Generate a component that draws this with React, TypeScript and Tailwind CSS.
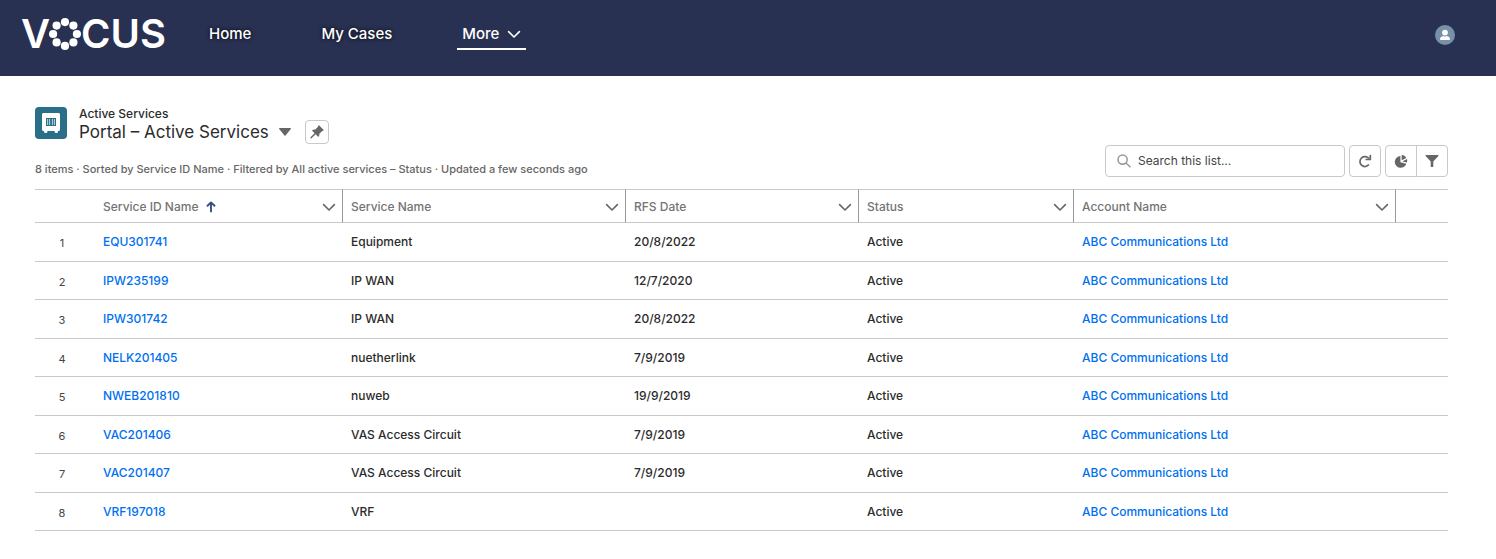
import React from 'react';
import { clsx } from 'clsx';

const columns = [
  { label: 'Service ID Name', width: 'w-[248px]', sorted: true },
  { label: 'Service Name', width: 'w-[283px]' },
  { label: 'RFS Date', width: 'w-[233px]' },
  { label: 'Status', width: 'w-[215px]' },
  { label: 'Account Name', width: '' },
];

const services = [
  { id: 'EQU301741', name: 'Equipment', date: '20/8/2022' },
  { id: 'IPW235199', name: 'IP WAN', date: '12/7/2020' },
  { id: 'IPW301742', name: 'IP WAN', date: '20/8/2022' },
  { id: 'NELK201405', name: 'nuetherlink', date: '7/9/2019' },
  { id: 'NWEB201810', name: 'nuweb', date: '19/9/2019' },
  { id: 'VAC201406', name: 'VAS Access Circuit', date: '7/9/2019' },
  { id: 'VAC201407', name: 'VAS Access Circuit', date: '7/9/2019' },
  { id: 'VRF197018', name: 'VRF', date: '' },
];

const Chevron = ({ className }: { className?: string }) => (
  <svg viewBox="0 0 14 14" className={className} fill="none" stroke="currentColor" strokeWidth="1.6" strokeLinecap="round" strokeLinejoin="round" aria-hidden="true">
    <path d="M1.6 4.6 7 10l5.4-5.4" />
  </svg>
);

const Logo = () => (
  <a href="#" aria-label="Vocus" className="flex items-center h-8 text-[40px] leading-8 font-semibold text-white">
    <span>V</span>
    <svg viewBox="0 0 32 32" className="size-8 -ml-px" fill="currentColor" aria-hidden="true">
      <circle cx="16" cy="4.1" r="4.1" />
      <circle cx="24.4" cy="7.6" r="4.1" />
      <circle cx="27.9" cy="16" r="4.1" />
      <circle cx="24.4" cy="24.4" r="4.1" />
      <circle cx="16" cy="27.9" r="4.1" />
      <circle cx="7.6" cy="24.4" r="4.1" />
      <circle cx="4.1" cy="16" r="4.1" />
      <circle cx="7.6" cy="7.6" r="4.1" />
    </svg>
    <span>CUS</span>
  </a>
);

const Header = () => (
  <header className="flex items-start h-[76px] pl-[21px] pr-[41px] bg-[#293152]">
    <div className="pt-[18px] w-[183px]">
      <Logo />
    </div>
    <nav className="flex pt-[18px] gap-[60px] text-[15px] leading-8 font-medium text-white [text-shadow:0_0_4px_#000]">
      <a href="#" className="px-[5px] h-8">Home</a>
      <a href="#" className="px-[5px] h-8">My Cases</a>
      <button type="button" className="flex items-center gap-2 px-[5px] pt-0.5 h-8 border-b-2 border-white">
        More
        <Chevron className="size-[14px]" />
      </button>
    </nav>
    <button type="button" aria-label="Profile" className="ml-auto mt-[25px] size-5 rounded-full bg-[#7890a8] text-white">
      <svg viewBox="0 0 20 20" fill="currentColor" aria-hidden="true">
        <circle cx="10" cy="7.6" r="2.9" />
        <path d="M5 14.2c0-2 1.4-2.8 3.2-3.2.5.4 1.1.6 1.8.6s1.3-.2 1.8-.6c1.8.4 3.2 1.2 3.2 3.2 0 .5-.4.8-.8.8H5.800c-.5 0-.8-.3-.8-.8z" />
      </svg>
    </button>
  </header>
);

const toolButton = 'flex items-center justify-center size-8 border border-[#c9c9c9] bg-white text-[#666]';

const ListHeader = () => (
  <div className="flex items-end justify-between">
    <div>
      <div className="flex">
        <span className="flex items-center justify-center size-8 rounded bg-[#2a6f8a]">
          <svg viewBox="0 0 32 32" className="size-8" aria-hidden="true">
            <path fill="#fff" d="M8.500 6h15c.9 0 1.500.6 1.500 1.500v15c0 .9-.6 1.500-1.500 1.500H23v.8c0 .7-.5 1.200-1.200 1.200h-1c-.7 0-1.200-.5-1.200-1.200V24h-7.200v.8c0 .7-.5 1.200-1.200 1.200h-1c-.7 0-1.200-.5-1.200-1.200V24h-.5c-.9 0-1.500-.6-1.500-1.500v-15C7 6.600 7.600 6 8.500 6z" />
            <path fill="#2a6f8a" d="M11 11h10v8H11z" />
            <path fill="none" stroke="#fff" strokeWidth=".7" d="M12.600 12v6M14.600 12v6M17.400 12v6M19.400 12v6" />
          </svg>
        </span>
        <div className="ml-3">
          <p className="text-xs leading-[13px] font-medium">Active Services</p>
          <div className="flex items-center h-6">
            <h1 className="text-[17px] leading-6">Portal – Active Services</h1>
            <button type="button" aria-label="Select a list view" className="ml-[10px] text-[#666]">
              <svg viewBox="0 0 12 8" className="w-3 h-2" fill="currentColor" aria-hidden="true">
                <path d="M.6 0h10.800c.5 0 .7.500.4.900L6.500 7.600c-.3.4-.7.4-1 0L.2.900C-.1.500.1 0 .6 0z" />
              </svg>
            </button>
            <button type="button" aria-label="Pin this list" className="flex items-center justify-center ml-[14px] size-6 rounded border border-[#c9c9c9] text-[#666]">
              <svg viewBox="0 0 14 14" className="size-[14px]" fill="currentColor" aria-hidden="true">
                <path d="M8.400.6c.3-.3.600-.3.900 0l4.100 4.100c.3.300.3.600 0 .9l-.4.300c-.3.300-.600.2-.9 0L9.200 9c.3 1 .1 1.900-.4 2.600-.3.300-.6.300-.9 0L5.700 9.300 1.500 13.300c-.3.200-.8.200-1-.1-.2-.2-.2-.6 0-.9L4.600 8.200 2.400 6c-.3-.3-.3-.600 0-.900.7-.5 1.600-.7 2.600-.4l3.100-2.900c-.2-.3-.2-.600 0-.9z" />
              </svg>
            </button>
          </div>
        </div>
      </div>
      <p className="mt-[17px] text-[11px] leading-4 font-medium text-[#666]">
        8 items · Sorted by Service ID Name · Filtered by All active services – Status · Updated a few seconds ago
      </p>
    </div>

    <div className="flex gap-1">
      <label className="flex items-center w-60 h-8 px-[11px] gap-[7px] rounded border border-[#c9c9c9]">
        <svg viewBox="0 0 14 14" className="size-[14px] shrink-0 text-[#999]" fill="none" stroke="currentColor" strokeWidth="1.5" strokeLinecap="round" aria-hidden="true">
          <circle cx="5.600" cy="5.600" r="4.600" />
          <path d="m9.200 9.200 3.800 3.600" />
        </svg>
        <input type="search" aria-label="Search this list" placeholder="Search this list..." className="w-full min-w-0 text-xs outline-none placeholder:text-[#444]" />
      </label>
      <button type="button" aria-label="Refresh" className={clsx(toolButton, 'rounded')}>
        <svg viewBox="0 0 14 14" className="size-[14px]" fill="none" stroke="currentColor" strokeWidth="1.7" aria-hidden="true">
          <path d="M10.900 10.600A5 5 0 1 1 11 4.600" />
          <path d="M12.300 1.500v4H8.200" strokeLinejoin="round" strokeLinecap="round" />
        </svg>
      </button>
      <div className="flex">
        <button type="button" aria-label="Show charts" className={clsx(toolButton, 'rounded-l')}>
          <svg viewBox="0 0 14 14" className="size-[14px]" fill="currentColor" aria-hidden="true">
            <path d="M6.400 2v6.200l5.900 1.500A5.900 5.900 0 1 1 6.400 2z" />
            <path d="M7.700.8a5.800 5.800 0 0 1 4.700 3.100L7.700 6.300zM8.300 7.400l4.800-2.400c.3 1.100.2 2.400-.2 3.500z" />
          </svg>
        </button>
        <button type="button" aria-label="Show filters" className={clsx(toolButton, 'rounded-r -ml-px')}>
          <svg viewBox="0 0 14 14" className="size-[14px]" fill="currentColor" aria-hidden="true">
            <path d="M1 1h12c.5 0 .7.500.400.900L8.300 7.400v5.100c0 .4-.3.600-.6.600H6.300c-.3 0-.6-.200-.6-.600V7.400L.6 1.900C.3 1.500.500 1 1 1z" />
          </svg>
        </button>
      </div>
    </div>
  </div>
);

const ServicesTable = () => (
  <table className="w-full mt-3 table-fixed border-separate border-spacing-0 text-xs leading-5 font-medium">
    <thead>
      <tr className="h-[34px]">
        <th aria-label="Row number" className="w-[60px] border-y border-[#c9c9c9]" />
        {columns.map((col) => (
          <th key={col.label} className={clsx('pl-2 pr-1.5 pt-0.5 pb-0 border-y border-r border-y-[#c9c9c9] border-r-[#999] font-medium text-[#747474]', col.width)}>
            <button type="button" className="flex items-center w-full">
              {col.label}
              {col.sorted && (
                <svg viewBox="0 0 10 12" className="ml-2 w-[10px] h-3" fill="none" stroke="#3a4f86" strokeWidth="1.9" strokeLinecap="round" strokeLinejoin="round" aria-hidden="true">
                  <path d="M5 10.500V1.500M1.500 4.800 5 1.400l3.500 3.400" />
                </svg>
              )}
              <Chevron className="ml-auto size-[14px] text-[#666]" />
            </button>
          </th>
        ))}
        <th aria-label="Actions" className="w-[52px] border-y border-[#c9c9c9]" />
      </tr>
    </thead>
    <tbody>
      {services.map((service, index) => (
        <tr key={service.id} className="odd:h-[39px] even:h-[38px] odd:[&>td+td]:pb-px [&>td]:border-b [&>td]:border-[#c9c9c9]">
          <td className="pt-0.5 pr-1.5 text-[11px] font-normal text-center text-[#444]">{index + 1}</td>
          <td className="px-2"><a href="#" className="text-[#0070f0]">{service.id}</a></td>
          <td className="px-2">{service.name}</td>
          <td className="px-2">{service.date}</td>
          <td className="px-2">Active</td>
          <td className="px-2"><a href="#" className="text-[#0070f0]">ABC Communications Ltd</a></td>
          <td />
        </tr>
      ))}
    </tbody>
  </table>
);

const App: React.FC = () => {
  return (
    <div className="min-h-screen bg-white text-[#2b2b2b] font-['Inter',sans-serif]">
      <Header />
      <main className="pt-[31px] pl-[35px] pr-12">
        <ListHeader />
        <ServicesTable />
      </main>
    </div>
  );
};

export default App;
